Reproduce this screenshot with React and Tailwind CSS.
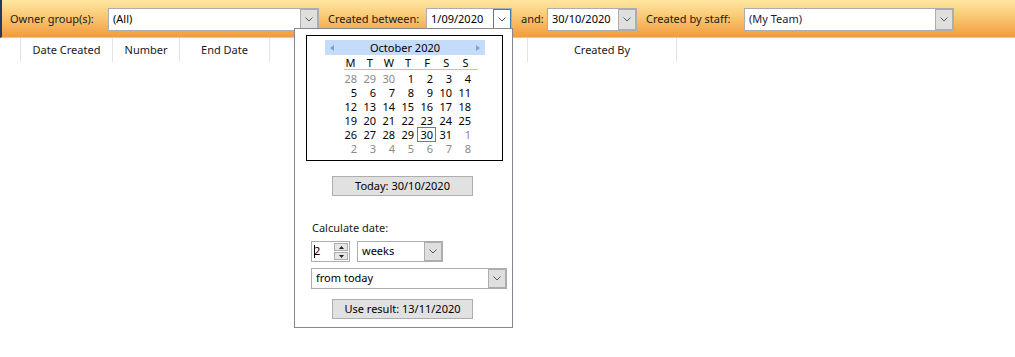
import React from "react";

const FONT = { fontFamily: '"Noto Sans", "Open Sans", sans-serif' };

const weeks = [
  [[28, 1], [29, 1], [30, 1], [1], [2], [3], [4]],
  [[5], [6], [7], [8], [9], [10], [11]],
  [[12], [13], [14], [15], [16], [17], [18]],
  [[19], [20], [21], [22], [23], [24], [25]],
  [[26], [27], [28], [29], [30, 0, 1], [31], [1, 1]],
  [[2, 1], [3, 1], [4, 1], [5, 1], [6, 1], [7, 1], [8, 1]],
];

function Chevron() {
  return (
    <svg width="8" height="5" viewBox="0 0 8 5">
      <polyline points="0.5,0.5 4,4 7.5,0.5" fill="none" stroke="#5a5a5a" strokeWidth="1" />
    </svg>
  );
}

function DropBtn({ focused }) {
  return (
    <div
      className={`w-[18px] flex items-center justify-center border ${
        focused ? "border-[#3c7fb1] bg-white" : "border-[#adadad] bg-[#dfdfdf]"
      }`}
    >
      <Chevron />
    </div>
  );
}

function Combo({ text, width, focused, h = "h-[23px]", textColor = "text-black" }) {
  return (
    <div className={`${width} ${h} flex items-stretch border border-[#abadb3] bg-white`}>
      <div className={`flex-1 flex items-center pl-[4px] whitespace-nowrap ${textColor}`}>{text}</div>
      <DropBtn focused={focused} />
    </div>
  );
}

function Label({ text, width }) {
  return <div className={`${width} h-[23px] flex items-center whitespace-nowrap text-[#1a1a1a]`}>{text}</div>;
}

function Calendar() {
  return (
    <div className="ml-[11px] mt-[6px] w-[197px] h-[126px] border border-black bg-white flex flex-col">
      {/* month bar */}
      <div className="ml-[18px] mt-[4px] w-[160px] h-[15px] bg-[#c4dbfa] flex items-center justify-between px-[5px]">
        <svg width="4" height="6" viewBox="0 0 4 6">
          <polygon points="4,0 0,3 4,6" fill="#7f9fcf" />
        </svg>
        <span className="text-black leading-none">October 2020</span>
        <svg width="4" height="6" viewBox="0 0 4 6">
          <polygon points="0,0 4,3 0,6" fill="#7f9fcf" />
        </svg>
      </div>
      {/* day names */}
      <div className="ml-[32px] w-[134px] h-[14px] grid grid-cols-7 items-center">
        {["M", "T", "W", "T", "F", "S", "S"].map((d, i) => (
          <div key={i} className="text-center pl-[4px] leading-none">
            {d}
          </div>
        ))}
      </div>
      <div className="ml-[37px] w-[134px] h-px bg-[#a9c6ee]" />
      <div className="ml-[32px] w-[133px] grid grid-cols-7 mt-[1px]">
        {weeks.flat().map(([n, gray, today], i) => (
          <div key={i} className="h-[14px] flex items-center justify-end">
            <span
              className={`leading-none ${gray ? "text-[#8a8a8a]" : "text-black"} ${
                today ? "border border-[#c0661a] px-[2px] py-[1px] -mr-[2px]" : "pr-[1px]"
              }`}
            >
              {n}
            </span>
          </div>
        ))}
      </div>
    </div>
  );
}

function GrayButton({ text, mt }) {
  return (
    <div
      className={`ml-[37px] ${mt} w-[141px] h-[20px] border border-[#adadad] bg-[#e1e1e1] flex items-center justify-center text-black`}
    >
      {text}
    </div>
  );
}

function Spinner() {
  return (
    <div className="w-[39px] h-[21px] border border-[#abadb3] bg-white flex items-stretch">
      <div className="flex-1 flex items-center pl-[2px]">
        <span className="w-px h-[13px] bg-black" />
        <span className="-ml-[1px]">2</span>
      </div>
      <div className="w-[14px] flex flex-col m-[1px] gap-px">
        <div className="flex-1 border border-[#adadad] bg-[#e6e6e6] flex items-center justify-center">
          <svg width="5" height="3" viewBox="0 0 5 3">
            <polygon points="0,3 2.5,0 5,3" fill="#222" />
          </svg>
        </div>
        <div className="flex-1 border border-[#adadad] bg-[#e6e6e6] flex items-center justify-center">
          <svg width="5" height="3" viewBox="0 0 5 3">
            <polygon points="0,0 2.5,3 5,0" fill="#222" />
          </svg>
        </div>
      </div>
    </div>
  );
}

export default function App() {
  const cols = [
    { w: "w-[20px]", t: "" },
    { w: "w-[92px]", t: "Date Created" },
    { w: "w-[67px]", t: "Number" },
    { w: "w-[90px]", t: "End Date" },
    { w: "w-[129px]", t: "Status" },
    { w: "w-[129px]", t: "" },
    { w: "w-[149px]", t: "Created By" },
  ];
  return (
    <div className="relative w-[1015px] h-[357px] bg-white text-[11px] overflow-hidden" style={FONT}>
      {/* toolbar */}
      <div className="h-[38px] border-b border-[#c6cbd1] border-l-2 border-l-[#1f3b63] bg-gradient-to-b from-[#fee7a1] via-[#f9c46e] to-[#f29a3a] flex items-start pt-[8px] pl-[8px]">
        <Label text="Owner group(s):" width="w-[98px]" />
        <Combo text="(All)" width="w-[211px]" />
        <div className="w-[9px]" />
        <Label text="Created between:" width="w-[98px]" />
        <Combo text="1/09/2020" width="w-[86px]" focused />
        <div className="w-[9px]" />
        <Label text="and:" width="w-[26px]" />
        <Combo text="30/10/2020" width="w-[90px]" />
        <div className="w-[9px]" />
        <Label text="Created by staff:" width="w-[98px]" />
        <Combo text="(My Team)" width="w-[210px]" textColor="text-[#1a1a3a]" />
      </div>

      {/* column header */}
      <div className="flex h-[24px]">
        {cols.map((c, i) => (
          <div
            key={i}
            className={`${c.w} shrink-0 ${i > 0 ? "border-l border-[#e3e3e3]" : ""} flex items-center justify-center text-[#1a1a1a] overflow-hidden whitespace-nowrap`}
          >
            {c.t}
          </div>
        ))}
        <div className="border-l border-[#e3e3e3]" />
      </div>

      {/* date picker popup */}
      <div className="absolute left-[294px] top-[28px] w-[219px] h-[300px] border border-[#828790] bg-white flex flex-col">
        <Calendar />
        <GrayButton text="Today: 30/10/2020" mt="mt-[15px]" />
        <div className="ml-[17px] mt-[24px] h-[16px] flex items-center text-[#1a1a1a]">Calculate date:</div>
        <div className="ml-[16px] mt-[5px] flex gap-[7px]">
          <Spinner />
          <Combo text="weeks" width="w-[86px]" h="h-[21px]" />
        </div>
        <div className="ml-[16px] mt-[6px]">
          <Combo text="from today" width="w-[196px]" h="h-[21px]" />
        </div>
        <GrayButton text="Use result: 13/11/2020" mt="mt-[10px]" />
      </div>
    </div>
  );
}
